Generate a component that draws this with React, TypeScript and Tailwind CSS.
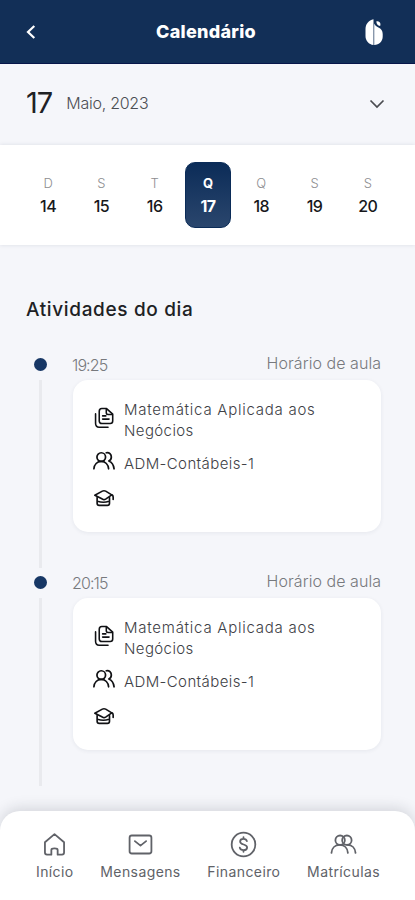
import { ReactNode } from "react";

const days = [
  { letter: "D", day: 14 },
  { letter: "S", day: 15 },
  { letter: "T", day: 16 },
  { letter: "Q", day: 17, selected: true },
  { letter: "Q", day: 18 },
  { letter: "S", day: 19 },
  { letter: "S", day: 20 },
];

const activities = [
  { time: "19:25", subject: "Matemática Aplicada aos Negócios", group: "ADM-Contábeis-1" },
  { time: "20:15", subject: "Matemática Aplicada aos Negócios", group: "ADM-Contábeis-1" },
];

function Icon({ children, className }: { children: ReactNode; className: string }) {
  return (
    <svg
      viewBox="0 0 24 24"
      fill="none"
      stroke="currentColor"
      strokeLinecap="round"
      strokeLinejoin="round"
      className={`shrink-0 ${className}`}
    >
      {children}
    </svg>
  );
}

function Logo() {
  return (
    <svg viewBox="0 0 20 28" className="w-5 h-7" fill="white">
      <path d="M9.500 1.200C4.600 2.200 1.500 6 1.500 11v7c0 4.700 3.200 8.500 8 9z" />
      <path d="M10.200 5.500c1 2.400 2.500 3.300 4.200 3.900 2.700 1 4.300 3.200 4.300 6.600v2.500c0 4.700-3.400 8.500-8.500 8.500z" />
      <path d="M12.400 3.300c1.900-.6 3.700.5 4 2.500.1.800 0 1.500-.3 2.200-2.300-.2-3.900-2-3.700-4.700z" />
    </svg>
  );
}

function FilesIcon() {
  return (
    <Icon className="w-[22px] h-[22px] stroke-[1.7]">
      <path d="M6.800 4.800C6.800 3 7.800 1.700 9.600 1.700h5.200L21.500 7.700v7.600c0 1.700-1 2.700-2.700 2.700H9.600c-1.800 0-2.800-1-2.800-2.700z" />
      <path d="M14.500 2v4.300c0 1.200.7 1.900 1.900 1.900h4.600M10.500 9.700h3.500M10.500 13.200h7" />
      <path d="M2.800 7.500v10.200c0 2.600 1.300 4.300 3.900 4.300h9.700" />
    </Icon>
  );
}

function PeopleIcon() {
  return (
    <Icon className="w-[22px] h-[22px] stroke-[1.9]">
      <circle cx="9" cy="7.700" r="4.700" />
      <path d="M1 20.500c.4-4.500 3.500-8 8-8s7.600 3.500 8 8" />
      <path d="M14.500 3c3.300-.6 5.500 1.700 5.500 4.600 0 2-1 3.600-2.700 4.400 3.200 1.300 5.200 4.500 5.700 8.500" />
    </Icon>
  );
}

function CapIcon() {
  return (
    <Icon className="w-[22px] h-[22px] stroke-[1.8]">
      <path d="M2 9l8.200-4.500c1.200-.6 2.400-.6 3.600 0L20.500 8.600l-6.700 4.600c-1.200.7-2.400.7-3.600 0z" />
      <path d="M4.500 11.500v6.200c0 1.500.8 2.300 2.300 2.300h8.900c1.500 0 2.300-.8 2.300-2.300v-6.200M20.500 8.600c1 .4 1.500 1.200 1.500 2.400v2.500M5 15.500c4 1.500 8.500 1.500 12.500 0" />
    </Icon>
  );
}

function Activity({ time, subject, group }: { time: string; subject: string; group: string }) {
  return (
    <div className="flex h-[218px]">
      <div className="w-[29px] shrink-0 flex flex-col items-center">
        <div className="w-[13px] h-[13px] rounded-full bg-[#173765] mt-[8px]" />
        <div className="w-[3px] h-[188px] bg-[#e9eaee] mt-[9px]" />
      </div>
      <div className="ml-[18px] w-[308px]">
        <div className="h-[30px] flex justify-between text-[16px] leading-[26px] font-light text-[#77797d]">
          <span className="pt-[2px] -ml-px tracking-[-0.9px]">{time}</span>
          <span className="tracking-[0.05px]">Horário de aula</span>
        </div>
        <div className="h-[152px] rounded-[15px] bg-white shadow-[0_1px_4px_rgba(30,40,70,0.07)] pl-5 pt-[19px] text-[15px] leading-[21px] font-light text-[#404146]">
          <div className="flex items-center gap-[9px] h-[42px]">
            <span className="text-[#101114] -mt-[5px]"><FilesIcon /></span>
            <p className="w-[220px] tracking-[0.4px] first-line:tracking-[0.75px]">{subject}</p>
          </div>
          <div className="flex items-center gap-[9px] h-[22px] mt-[11px]">
            <span className="text-[#101114] -mt-[4px]"><PeopleIcon /></span>
            <p className="tracking-[0.4px]">{group}</p>
          </div>
          <div className="mt-[13px] text-[#101114]"><CapIcon /></div>
        </div>
      </div>
    </div>
  );
}

export default function App() {
  return (
    <div className="w-[415px] h-[900px] overflow-hidden flex flex-col bg-[#f5f6fa] font-['Inter',sans-serif] text-[#202124]">
      <header className="h-[64px] shrink-0 bg-[#122f57] border-b border-[#07164a] flex items-center justify-between pl-[26px] pr-[31px] text-white">
        <svg viewBox="0 0 10 16" className="w-[10px] h-4" fill="none" stroke="currentColor" strokeWidth="2.200">
          <path d="M8.300 2L2 8l6.300 6" />
        </svg>
        <h1 className="text-[18px] font-extrabold tracking-[0.25px] ml-[12px]">Calendário</h1>
        <Logo />
      </header>

      <div className="h-[81px] shrink-0 flex items-center pl-[26px] pr-[30px] pb-[3px]">
        <span className="text-[29px] tracking-[-1px]">17</span>
        <span className="ml-[14px] text-[16px] font-light text-[#4c4e53] tracking-[-0.25px]">Maio, 2023</span>
        <svg viewBox="0 0 16 10" className="w-4 h-[10px] ml-auto mt-px text-[#4a4b50]" fill="none" stroke="currentColor" strokeWidth="1.700">
          <path d="M1.500 1.500L8 8l6.500-6.500" />
        </svg>
      </div>

      <div className="h-[100px] shrink-0 bg-white shadow-[0_0_4px_rgba(30,40,70,0.12)] grid grid-cols-7 pl-[21.5px] pr-[20.5px] pt-[17px]">
        {days.map((d) => (
          <div
            key={d.day}
            className={`w-[46px] h-[66px] mx-auto rounded-[10px] flex flex-col items-center pt-[11px] ${
              d.selected ? "bg-linear-to-b from-[#0b2c58] to-[#2a466d] border border-[#0b2c58] text-white" : "text-[#17181b]"
            }`}
          >
            <span className={`text-[13px] leading-[20px] ${d.selected ? "font-bold -mt-px" : "font-light text-[#8d8d90]"}`}>
              {d.letter}
            </span>
            <span className={`text-[16px] leading-[26px] tracking-[-0.5px] ${d.selected ? "font-bold" : "font-medium"}`}>{d.day}</span>
          </div>
        ))}
      </div>

      <main className="flex-1 pl-[26px] pt-[51px]">
        <h2 className="text-[19px] leading-[28px] font-medium tracking-[0.65px]">Atividades do dia</h2>
        <div className="mt-[26px]">
          {activities.map((a) => (
            <Activity key={a.time} {...a} />
          ))}
        </div>
      </main>

      <nav className="h-[89px] shrink-0 rounded-t-[20px] bg-white shadow-[0_-3px_14px_rgba(30,35,50,0.15)] flex justify-between pl-[36px] pr-[35px] pt-[20px] text-[14px] leading-5 tracking-[0.4px] text-[#606268]">
        <div className="flex flex-col items-center">
          <Icon className="w-[27px] h-[27px] stroke-[1.600]">
            <path d="M3.500 10L12 2.800l8.500 7.200v9.200c0 1.200-.7 1.800-1.800 1.800h-3.900v-4.200c0-1.800-5.600-1.800-5.600 0V21H5.300c-1.100 0-1.800-.6-1.800-1.800z" />
          </Icon>
          <span className="mt-[4px]">Início</span>
        </div>
        <div className="flex flex-col items-center">
          <Icon className="w-[27px] h-[27px] stroke-[1.600]">
            <rect x="2.300" y="4" width="19.400" height="16" rx="2" />
            <path d="M7 9l5 4 5-4" />
          </Icon>
          <span className="mt-[4px]">Mensagens</span>
        </div>
        <div className="flex flex-col items-center">
          <Icon className="w-[27px] h-[27px] stroke-[1.600]">
            <circle cx="12" cy="12" r="10.500" />
            <path d="M15 9c-.3-1.300-1.300-2-3-2s-3 .9-3 2.300c0 3.700 6.200 1.700 6.200 5.300 0 1.500-1.200 2.400-3.200 2.400s-3-.8-3.300-2.200M12 5.500V7M12 17v1.500" />
          </Icon>
          <span className="mt-[4px]">Financeiro</span>
        </div>
        <div className="flex flex-col items-center">
          <Icon className="w-[27px] h-[27px] stroke-[1.600]">
            <circle cx="9" cy="8.200" r="4.200" />
            <circle cx="15" cy="8.200" r="4.200" />
            <path d="M1.300 19.500c.3-4.300 3.200-7.100 7.300-7.100s7 2.800 7.300 7.100" />
            <path d="M15.400 12.400c4.100 0 7 2.800 7.300 7.100" />
          </Icon>
          <span className="mt-[4px]">Matrículas</span>
        </div>
      </nav>
    </div>
  );
}
